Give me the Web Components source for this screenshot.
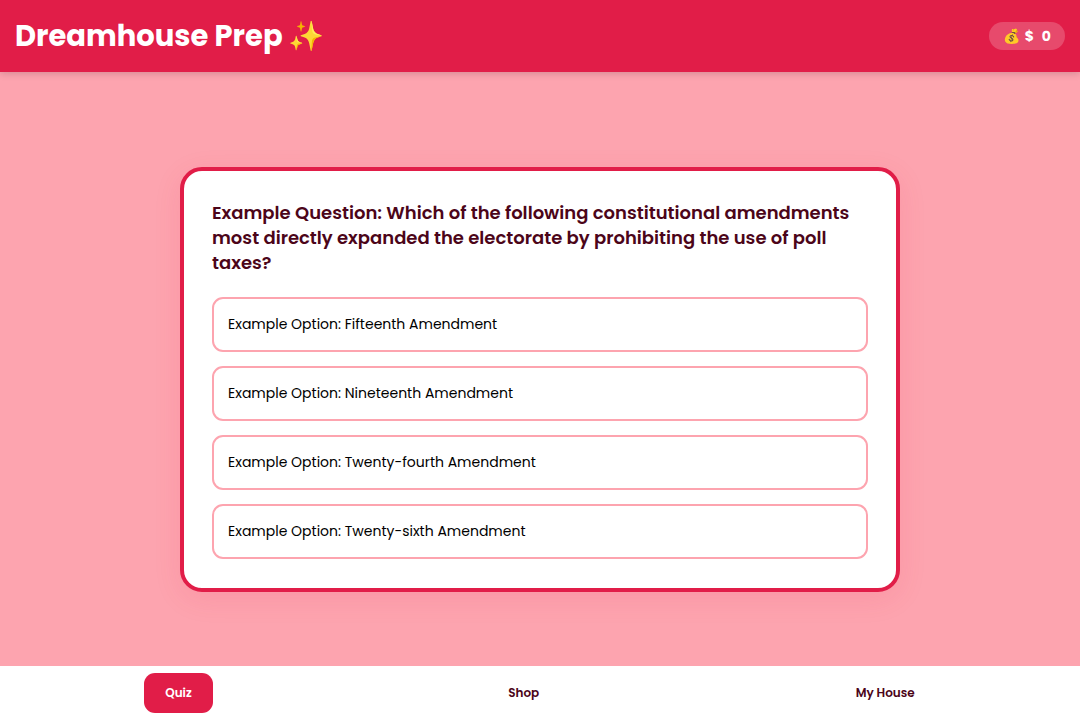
<!DOCTYPE html>
<html lang="en">
<head>
<meta charset="utf-8">
<meta name="viewport" content="width=device-width, initial-scale=1">
<title>Dreamhouse Prep</title>
<style>
  :root {
    --rose: #e11d48;
    --pink: #fda4af;
    --wine: #4c0519;
  }
  body {
    margin: 0;
    font-family: Poppins, Inter, "Noto Color Emoji", sans-serif;
    background: var(--pink);
  }
</style>
</head>
<body>
<prep-app></prep-app>

<script>
class PrepElement extends HTMLElement {
  constructor() {
    super();
    this.attachShadow({ mode: "open" }).innerHTML = this.template();
  }
}

customElements.define("coin-balance", class extends PrepElement {
  template() {
    return `
      <style>
        :host {
          display: flex; align-items: center; gap: 4px;
          height: 28px; padding: 0 14px; border-radius: 14px;
          background: rgba(255, 255, 255, 0.2);
          font-size: 14px; font-weight: 700;
        }
        .amount { display: flex; gap: 8px; }
      </style>
      <span>💰</span>
      <span class="amount"><span>$</span><slot></slot></span>`;
  }
});

customElements.define("app-header", class extends PrepElement {
  template() {
    return `
      <style>
        :host {
          display: flex; align-items: center; justify-content: space-between;
          box-sizing: border-box; min-height: 72px; padding: 14px 15px;
          background: var(--rose); color: #fff;
          box-shadow: 0 2px 7px rgba(0, 0, 0, 0.15);
          position: relative;
        }
        h1 { margin: 0; font-size: 29px; line-height: 44px; font-weight: 700; }
      </style>
      <h1>Dreamhouse Prep ✨</h1>
      <slot></slot>`;
  }
});

customElements.define("quiz-option", class extends PrepElement {
  template() {
    return `
      <style>
        :host { display: block; }
        button {
          display: block; width: 100%; padding: 14px;
          border: 2px solid var(--pink); border-radius: 11px;
          background: #fff; color: #000; text-align: left;
          font: inherit; font-size: 14px; line-height: 23px; cursor: pointer;
        }
        button:hover { background: #fff1f2; }
      </style>
      <button type="button"><slot></slot></button>`;
  }
});

customElements.define("quiz-card", class extends PrepElement {
  template() {
    return `
      <style>
        :host {
          display: block; box-sizing: border-box; width: 100%; max-width: 720px;
          padding: 29px 28px; border: 4px solid var(--rose); border-radius: 22px;
          background: #fff; box-shadow: 0 7px 28px rgba(225, 29, 72, 0.1);
        }
        h2 {
          margin: 0 0 22px; color: var(--wine);
          font-size: 18px; line-height: 25px; font-weight: 600;
        }
        .options { display: grid; gap: 14px; }
      </style>
      <h2><slot name="question"></slot></h2>
      <div class="options"><slot></slot></div>`;
  }
});

customElements.define("nav-tab", class extends PrepElement {
  template() {
    return `
      <style>
        :host { display: block; }
        button {
          display: block; padding: 11px 21px; border: 0; border-radius: 11px;
          background: transparent; color: var(--wine);
          font: inherit; font-size: 12px; line-height: 18px; font-weight: 600;
          cursor: pointer;
        }
        :host([active]) button { background: var(--rose); color: #fff; }
      </style>
      <button type="button"><slot></slot></button>`;
  }
});

customElements.define("tab-bar", class extends PrepElement {
  template() {
    return `
      <style>
        :host { display: block; background: #fff; }
        nav { display: flex; justify-content: space-around; padding: 7px; }
      </style>
      <nav><slot></slot></nav>`;
  }
});

customElements.define("prep-app", class extends PrepElement {
  template() {
    return `
      <style>
        :host { display: flex; flex-direction: column; min-height: 100vh; }
        main {
          flex: 1; display: flex; align-items: center; justify-content: center;
          padding: 35px 14px 14px;
        }
      </style>
      <app-header><coin-balance>0</coin-balance></app-header>
      <main>
        <quiz-card>
          <span slot="question">Example Question: Which of the following constitutional amendments most directly expanded the electorate by prohibiting the use of poll taxes?</span>
          <quiz-option>Example Option: Fifteenth Amendment</quiz-option>
          <quiz-option>Example Option: Nineteenth Amendment</quiz-option>
          <quiz-option>Example Option: Twenty-fourth Amendment</quiz-option>
          <quiz-option>Example Option: Twenty-sixth Amendment</quiz-option>
        </quiz-card>
      </main>
      <tab-bar>
        <nav-tab active>Quiz</nav-tab>
        <nav-tab>Shop</nav-tab>
        <nav-tab>My House</nav-tab>
      </tab-bar>`;
  }
});
</script>
</body>
</html>
